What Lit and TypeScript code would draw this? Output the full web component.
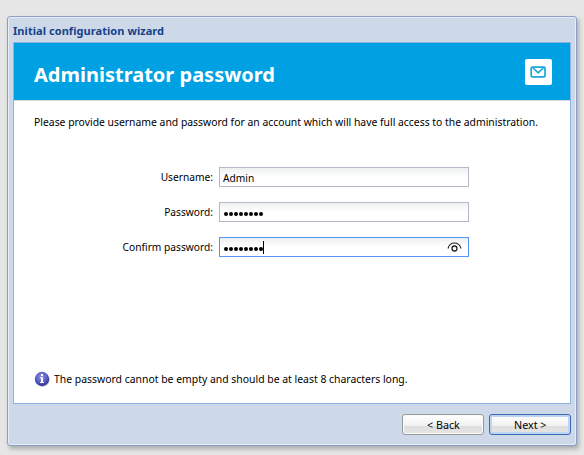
import { LitElement, html, css } from "lit";
import { customElement } from "lit/decorators.js";

@customElement("app-root")
export class AppRoot extends LitElement {
  static styles = css`
    :host {
      display: block;
      box-sizing: border-box;
      width: 584px;
      height: 455px;
      padding: 16px 7px 9px;
      overflow: hidden;
      background: #e6e6e6;
      color: #000;
      font: 11.4px/16px "Noto Sans", "Open Sans", sans-serif;
    }
    * { box-sizing: border-box; }
    .window {
      display: flex;
      flex-direction: column;
      width: 570px;
      height: 430px;
      padding: 0 5px;
      border: 1px solid #8ba0c4;
      border-radius: 3px;
      background: #cdd9e8;
      box-shadow: inset 0 0 0 1px #e6edf6, 2px 3px 4px rgba(0, 0, 0, 0.25);
    }
    .caption {
      height: 25px;
      padding-top: 6px;
      color: #15428b;
      font-size: 11px;
      font-weight: 700;
      line-height: 16px;
      letter-spacing: 0.06px;
      white-space: nowrap;
    }
    .panel {
      display: flex;
      flex-direction: column;
      height: 362px;
      border: 1px solid #8db2e3;
      background: #fff;
    }
    .banner {
      display: flex;
      justify-content: space-between;
      height: 58px;
      padding: 16px 18px 0 20px;
      border-bottom: 1px solid #d0d8dc;
      background: #00a1e2;
    }
    h1 {
      margin: 0;
      color: #fff;
      font-size: 20px;
      line-height: 32px;
      white-space: nowrap;
    }
    .logo { width: 27px; height: 26px; }
    .intro, .hint-text, label { white-space: nowrap; }
    .intro { margin: 13px 0 0 20px; width: 553px; transform: scaleX(0.911); transform-origin: 0 0; }
    .form {
      display: grid;
      grid-template-columns: 199px 250px;
      column-gap: 6px;
      row-gap: 15px;
      margin-top: 37px;
    }
    label { text-align: right; line-height: 20px; transform: scaleX(0.895); transform-origin: 100% 0; }
    .field {
      display: flex;
      align-items: center;
      height: 20px;
      padding: 0 6px 0 3px;
      border: 1px solid #b5b8c8;
      background: linear-gradient(#edf0f0, #fff 9px);
    }
    .field.focus { border-color: #5596f6; }
    .value { padding-top: 2px; transform: scaleX(0.895); transform-origin: 0 0; }
    .dots { display: flex; margin: 3px 0 0 1px; }
    .dot { width: 4px; height: 4px; margin-right: 1px; border-radius: 50%; background: #000; }
    .dot:last-child { margin-right: 0; }
    .caret { width: 1px; height: 13px; background: #000; }
    .eye { width: 15px; height: 12px; margin-left: auto; }
    .hint { display: flex; gap: 4px; margin: auto 0 16px 20px; align-items: center; }
    .hint-text { transform: scaleX(0.914); transform-origin: 0 0; }
    .info { width: 16px; height: 16px; margin-top: -1px; }
    .buttons { display: flex; justify-content: flex-end; gap: 5px; margin-top: 10px; }
    button {
      width: 82px;
      height: 21px;
      padding: 0 0 1px 1px;
      border: 1px solid #999;
      border-radius: 3px;
      background: linear-gradient(#fff, #f1f1f1 11px, #dedede 11px, #e5e5e5);
      box-shadow: inset 0 0 0 1px #fafafa;
      color: #000;
      font: inherit;
      line-height: 17px;
    }
    .button-text { display: inline-block; transform: scaleX(0.94); }
    .primary { padding-left: 0; border-color: #3769b5; box-shadow: inset 0 0 0 2px #bfd5ef; }
  `;

  private dots() {
    return html`<span class="dots">${Array.from({ length: 8 }, () => html`<i class="dot"></i>`)}</span>`;
  }

  render() {
    return html`
      <section class="window">
        <div class="caption">Initial configuration wizard</div>
        <div class="panel">
          <header class="banner">
            <h1>Administrator password</h1>
            <svg class="logo" viewBox="0 0 27 26">
              <rect width="27" height="26" rx="2" fill="#fff" />
              <rect x="6.2" y="8.2" width="13.8" height="9.6" rx="1" fill="none" stroke="#1ba8dc" stroke-width="1.7" />
              <path d="M8 9l5.2 4.8L18.3 9" fill="none" stroke="#1ba8dc" stroke-width="1.7" />
            </svg>
          </header>
          <div class="intro">Please provide username and password for an account which will have full access to the administration.</div>
          <div class="form">
            <label>Username:</label>
            <div class="field"><span class="value">Admin</span></div>
            <label>Password:</label>
            <div class="field">${this.dots()}</div>
            <label>Confirm password:</label>
            <div class="field focus">
              ${this.dots()}<i class="caret"></i>
              <svg class="eye" viewBox="0 0 15 12" fill="none" stroke="#222">
                <path d="M1 7.5C2 4 4.5 2 7.5 2S13 4 14 7.5" stroke-width="1.1" />
                <circle cx="7.5" cy="7.5" r="2.5" stroke-width="1.3" />
              </svg>
            </div>
          </div>
          <div class="hint">
            <svg class="info" viewBox="0 0 16 16">
              <defs>
                <radialGradient id="ball" cx=".45" cy=".35" r=".65">
                  <stop offset="0" stop-color="#8f93e2" />
                  <stop offset=".6" stop-color="#5a5cc4" />
                  <stop offset="1" stop-color="#30318f" />
                </radialGradient>
              </defs>
              <circle cx="8.7" cy="8.8" r="7" fill="#c9c9d4" />
              <circle cx="8" cy="8" r="7.2" fill="url(#ball)" />
              <path d="M7 3h2v2H7zM6 6.3h3V11h1v1H6v-1h1V7.3H6z" fill="#fff" />
            </svg>
            <span class="hint-text">The password cannot be empty and should be at least 8 characters long.</span>
          </div>
        </div>
        <div class="buttons">
          <button><span class="button-text">&lt; Back</span></button>
          <button class="primary"><span class="button-text">Next &gt;</span></button>
        </div>
      </section>
    `;
  }
}
